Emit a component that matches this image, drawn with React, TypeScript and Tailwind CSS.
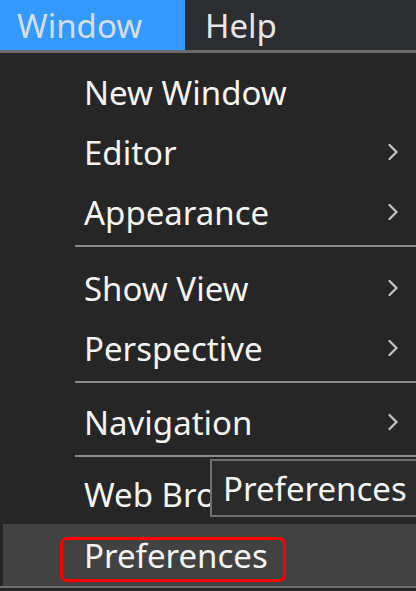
import React from 'react';

type Item = { label: string; sub?: boolean };

const groups: { items: Item[]; after: string }[] = [
  { items: [{ label: 'New Window' }, { label: 'Editor', sub: true }, { label: 'Appearance', sub: true }], after: 'mb-[11px]' },
  { items: [{ label: 'Show View', sub: true }, { label: 'Perspective', sub: true }], after: 'mb-[9px]' },
  { items: [{ label: 'Navigation', sub: true }], after: 'mb-[7px]' },
];

const Chevron = () => (
  <svg width="12" height="18" viewBox="0 0 12 18" className="text-[#c4c4c4]">
    <path d="M2.5 2 L9.5 9 L2.5 16" fill="none" stroke="currentColor" strokeWidth="2.2" strokeLinecap="round" />
  </svg>
);

const Row = ({ item }: { item: Item }) => (
  <div className="flex h-[60px] items-center justify-between pl-[84px] pr-[17px]">
    <span>{item.label}</span>
    {item.sub && <Chevron />}
  </div>
);

const App: React.FC = () => {
  return (
    <div
      className="h-[591px] w-[416px] overflow-hidden bg-[#262626] text-[33px] leading-none text-[#f4f4f4]"
      style={{ fontFamily: '"Noto Sans", "Open Sans", sans-serif' }}
    >
      {/* menu bar */}
      <div className="flex h-[53px] border-b-[3px] border-[#6b6b6b] bg-[#2b2d30]">
        <div className="flex w-[185px] items-center bg-[#3399ff] pl-[17px] text-[#d6dde6]">Window</div>
        <div className="flex items-center pl-[20px] text-[#e6e6e6]">Help</div>
      </div>

      {/* dropdown */}
      <div className="relative pt-[9px]">
        {groups.map((g, i) => (
          <div key={i}>
            {g.items.map((it) => (
              <Row key={it.label} item={it} />
            ))}
            <div className={`ml-[75px] mt-[3px] h-[2px] bg-[#8a8a8a] ${g.after}`} />
          </div>
        ))}
        <div className="flex h-[60px] items-center pl-[84px]">
          <span>Web Browser</span>
        </div>
        <div className="relative ml-[3px] flex h-[62px] items-center bg-[#424242] pl-[81px]">
          <span>Preferences</span>
          <div className="absolute left-[57px] top-[13px] h-[45px] w-[226px] rounded-[7px] border-[3px] border-[#ff0000]" />
        </div>
        <div className="h-[2px] bg-[#6e6e6e]" />

        {/* tooltip */}
        <div className="absolute left-[210px] top-[406px] flex h-[58px] w-[230px] items-center border-2 border-[#707070] bg-[#2b2b2b] pl-[11px]">
          Preferences
        </div>
      </div>
    </div>
  );
};

export default App;
